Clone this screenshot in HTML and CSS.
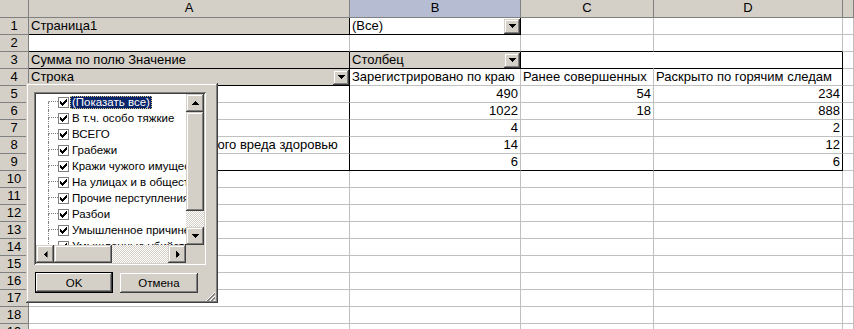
FILE: index.html
```html
<!DOCTYPE html>
<html lang="ru">
<head>
<meta charset="UTF-8">
<title>Сводная таблица</title>
<link rel="stylesheet" href="styles.css">
</head>
<body>
<div class="wrap">
<div class="sheet">
    <div class="hd"></div>
    <div class="hd">A</div>
    <div class="hd sel">B</div>
    <div class="hd">C</div>
    <div class="hd">D</div>
    <div class="hd"></div>

    <div class="hd">1</div>
    <div class="fld br bb">Страница1</div>
    <div class="drop br bb"><span>(Все)</span><span class="dd"><svg width="7" height="4"><path d="M0 0h7v1h-1v1h-1v1h-1v1h-1v-1h-1v-1h-1v-1h-1z"/></svg></span></div>
    <div></div>
    <div></div>
    <div></div>

    <div class="hd">2</div>
    <div class="bb"></div>
    <div class="bb"></div>
    <div class="bb"></div>
    <div class="bb"></div>
    <div></div>

    <div class="hd">3</div>
    <div class="fld br bb">Сумма по полю Значение</div>
    <div class="fld drop br bb"><span>Столбец</span><span class="dd"><svg width="7" height="4"><path d="M0 0h7v1h-1v1h-1v1h-1v1h-1v-1h-1v-1h-1v-1h-1z"/></svg></span></div>
    <div class="nr bb"></div>
    <div class="br bb"></div>
    <div></div>

    <div class="hd">4</div>
    <div class="fld drop br bb"><span>Строка</span><span class="dd"><svg width="7" height="4"><path d="M0 0h7v1h-1v1h-1v1h-1v1h-1v-1h-1v-1h-1v-1h-1z"/></svg></span></div>
    <div>Зарегистрировано по краю</div>
    <div>Ранее совершенных</div>
    <div class="br">Раскрыто по горячим следам</div>
    <div></div>

    <div class="hd">5</div>
    <div class="br"></div>
    <div class="num">490</div>
    <div class="num">54</div>
    <div class="num br">234</div>
    <div></div>

    <div class="hd">6</div>
    <div class="br"></div>
    <div class="num">1022</div>
    <div class="num">18</div>
    <div class="num br">888</div>
    <div></div>

    <div class="hd">7</div>
    <div class="br"></div>
    <div class="num">4</div>
    <div class="num"></div>
    <div class="num br">2</div>
    <div></div>

    <div class="hd">8</div>
    <div class="br">Умышленное причинение тяжкого вреда здоровью</div>
    <div class="num">14</div>
    <div class="num"></div>
    <div class="num br">12</div>
    <div></div>

    <div class="hd">9</div>
    <div class="br bb"></div>
    <div class="num bb">6</div>
    <div class="num bb"></div>
    <div class="num br bb">6</div>
    <div></div>

    <div class="hd">10</div><div></div><div></div><div></div><div></div><div></div>
    <div class="hd">11</div><div></div><div></div><div></div><div></div><div></div>
    <div class="hd">12</div><div></div><div></div><div></div><div></div><div></div>
    <div class="hd">13</div><div></div><div></div><div></div><div></div><div></div>
    <div class="hd">14</div><div></div><div></div><div></div><div></div><div></div>
    <div class="hd">15</div><div></div><div></div><div></div><div></div><div></div>
    <div class="hd">16</div><div></div><div></div><div></div><div></div><div></div>
    <div class="hd">17</div><div></div><div></div><div></div><div></div><div></div>
    <div class="hd">18</div><div></div><div></div><div></div><div></div><div></div>
    <div class="hd">19</div><div></div><div></div><div></div><div></div><div></div>
</div>

<!-- выпадающий список поля "Строка" -->
<div class="popup">
    <div class="lb">
        <div class="items">
            <div class="item first"><i class="tree"><b></b><b></b></i><span class="cb"><svg width="7" height="7"><path d="M0 2h1v3h-1zM1 3h1v3h-1zM2 4h1v3h-1zM3 3h1v3h-1zM4 2h1v3h-1zM5 1h1v3h-1zM6 0h1v3h-1z"/></svg></span><span class="lbl on">(Показать все)</span></div>
            <div class="item"><i class="tree"><b></b><b></b></i><span class="cb"><svg width="7" height="7"><path d="M0 2h1v3h-1zM1 3h1v3h-1zM2 4h1v3h-1zM3 3h1v3h-1zM4 2h1v3h-1zM5 1h1v3h-1zM6 0h1v3h-1z"/></svg></span><span class="lbl">В т.ч. особо тяжкие</span></div>
            <div class="item"><i class="tree"><b></b><b></b></i><span class="cb"><svg width="7" height="7"><path d="M0 2h1v3h-1zM1 3h1v3h-1zM2 4h1v3h-1zM3 3h1v3h-1zM4 2h1v3h-1zM5 1h1v3h-1zM6 0h1v3h-1z"/></svg></span><span class="lbl">ВСЕГО</span></div>
            <div class="item"><i class="tree"><b></b><b></b></i><span class="cb"><svg width="7" height="7"><path d="M0 2h1v3h-1zM1 3h1v3h-1zM2 4h1v3h-1zM3 3h1v3h-1zM4 2h1v3h-1zM5 1h1v3h-1zM6 0h1v3h-1z"/></svg></span><span class="lbl">Грабежи</span></div>
            <div class="item"><i class="tree"><b></b><b></b></i><span class="cb"><svg width="7" height="7"><path d="M0 2h1v3h-1zM1 3h1v3h-1zM2 4h1v3h-1zM3 3h1v3h-1zM4 2h1v3h-1zM5 1h1v3h-1zM6 0h1v3h-1z"/></svg></span><span class="lbl">Кражи чужого имущества</span></div>
            <div class="item"><i class="tree"><b></b><b></b></i><span class="cb"><svg width="7" height="7"><path d="M0 2h1v3h-1zM1 3h1v3h-1zM2 4h1v3h-1zM3 3h1v3h-1zM4 2h1v3h-1zM5 1h1v3h-1zM6 0h1v3h-1z"/></svg></span><span class="lbl">На улицах и в общественных местах</span></div>
            <div class="item"><i class="tree"><b></b><b></b></i><span class="cb"><svg width="7" height="7"><path d="M0 2h1v3h-1zM1 3h1v3h-1zM2 4h1v3h-1zM3 3h1v3h-1zM4 2h1v3h-1zM5 1h1v3h-1zM6 0h1v3h-1z"/></svg></span><span class="lbl">Прочие перступления</span></div>
            <div class="item"><i class="tree"><b></b><b></b></i><span class="cb"><svg width="7" height="7"><path d="M0 2h1v3h-1zM1 3h1v3h-1zM2 4h1v3h-1zM3 3h1v3h-1zM4 2h1v3h-1zM5 1h1v3h-1zM6 0h1v3h-1z"/></svg></span><span class="lbl">Разбои</span></div>
            <div class="item"><i class="tree"><b></b><b></b></i><span class="cb"><svg width="7" height="7"><path d="M0 2h1v3h-1zM1 3h1v3h-1zM2 4h1v3h-1zM3 3h1v3h-1zM4 2h1v3h-1zM5 1h1v3h-1zM6 0h1v3h-1z"/></svg></span><span class="lbl">Умышленное причинение тяжкого вреда здоровью</span></div>
            <div class="item"><i class="tree"><b></b><b></b></i><span class="cb"><svg width="7" height="7"><path d="M0 2h1v3h-1zM1 3h1v3h-1zM2 4h1v3h-1zM3 3h1v3h-1zM4 2h1v3h-1zM5 1h1v3h-1zM6 0h1v3h-1z"/></svg></span><span class="lbl">Умышленные убийства</span></div>
        </div>
        <div class="vs">
            <div class="sb up"><svg width="7" height="4"><path d="M0 0h7v1h-1v1h-1v1h-1v1h-1v-1h-1v-1h-1v-1h-1z"/></svg></div>
            <div class="thumb"></div>
            <div class="track"></div>
            <div class="sb"><svg width="7" height="4"><path d="M0 0h7v1h-1v1h-1v1h-1v1h-1v-1h-1v-1h-1v-1h-1z"/></svg></div>
        </div>
        <div class="hs">
            <div class="sb left"><svg width="7" height="4"><path d="M0 0h7v1h-1v1h-1v1h-1v1h-1v-1h-1v-1h-1v-1h-1z"/></svg></div>
            <div class="thumb"></div>
            <div class="track"></div>
            <div class="sb right"><svg width="7" height="4"><path d="M0 0h7v1h-1v1h-1v1h-1v1h-1v-1h-1v-1h-1v-1h-1z"/></svg></div>
        </div>
        <div class="corner"></div>
    </div>
    <div class="btns">
        <div class="btn def">OK</div>
        <div class="btn">Отмена</div>
        <svg class="grip" width="11" height="11">
            <path d="M10 1L1 10M10 5L5 10M10 9L9 10" stroke="#fff"/>
            <path d="M10 2L2 10M10 3L3 10M10 6L6 10M10 7L7 10" stroke="#808080"/>
        </svg>
    </div>
</div>
</div>
</body>
</html>
```

FILE: styles.css
```css
body {
    margin: 0;
    font-family: "Liberation Sans", Arial, sans-serif;
    background: #fff;
    overflow: hidden;
}
.wrap {
    position: relative;
    width: 854px;
    height: 329px;
    overflow: hidden;
}

/* лист */
.sheet {
    display: grid;
    grid-template-columns: 29px 321px 171px 133px 189px 1fr;
    grid-template-rows: 18px;
    grid-auto-rows: 17px;
    font-size: 13px;
    color: #000;
}
.sheet > div {
    box-sizing: border-box;
    border-right: 1px solid #c0c0c0;
    border-bottom: 1px solid #c0c0c0;
    white-space: nowrap;
    overflow: hidden;
    line-height: 16px;
    padding: 0 2px;
}
.sheet > .hd {
    background: #d4d0c8;
    border-color: #808080;
    text-align: center;
    padding: 0;
}
.sheet > .sel {
    background: #b6bdd2;
}
.sheet > .fld {
    background: #d4d0c8;
}
.sheet > .br {
    border-right-color: #000;
}
.sheet > .bb {
    border-bottom-color: #000;
}
.sheet > .nr {
    border-right-color: #fff;
}
.sheet > .num {
    text-align: right;
}
.sheet > .drop {
    display: flex;
    justify-content: space-between;
    align-items: center;
    padding-right: 0;
}
.dd {
    width: 16px;
    height: 15px;
    box-sizing: border-box;
    background: #d4d0c8;
    box-shadow: inset -1px -1px #404040, inset 1px 1px #d4d0c8, inset -2px -2px #808080, inset 2px 2px #fff;
    display: flex;
    align-items: center;
    justify-content: center;
}
.dd svg, .sb svg {
    shape-rendering: crispEdges;
}

/* окно фильтра */
.popup {
    position: absolute;
    left: 26px;
    top: 83px;
    width: 192px;
    height: 220px;
    box-sizing: border-box;
    padding: 9px 3px 0 8px;
    background: #d4d0c8;
    box-shadow: inset -1px -1px #404040, inset 1px 1px #d4d0c8, inset -2px -2px #808080, inset 2px 2px #fff;
    font-size: 11.5px;
}
.lb {
    width: 172px;
    height: 173px;
    box-sizing: border-box;
    padding: 2px;
    background: #fff;
    box-shadow: inset 1px 1px #808080, inset -1px -1px #fff, inset 2px 2px #404040, inset -2px -2px #d4d0c8;
    display: grid;
    grid-template-columns: 150px 18px;
    grid-template-rows: 151px 18px;
}
.items {
    overflow: hidden;
}
.item {
    display: flex;
    align-items: center;
    height: 16px;
    padding-left: 12px;
    white-space: nowrap;
}
.tree {
    width: 10px;
    height: 16px;
    flex: none;
}
.tree b {
    display: block;
    height: 8px;
    box-sizing: border-box;
    border-left: 1px dotted #808080;
}
.tree b:first-child {
    border-bottom: 1px dotted #808080;
}
.first .tree b:first-child {
    border-left-color: transparent;
}
.cb {
    width: 11px;
    height: 11px;
    box-sizing: border-box;
    flex: none;
    border: 1px solid #808080;
    background: #fff;
    display: flex;
    align-items: center;
    justify-content: center;
}
.cb svg {
    shape-rendering: crispEdges;
}
.lbl {
    margin-left: 1px;
    padding: 0 2px;
    height: 13px;
    line-height: 13px;
    box-sizing: border-box;
}
.lbl.on {
    background: #0a246a;
    color: #fff;
    outline: 1px dotted #d8c27a;
    outline-offset: -1px;
}

/* полосы прокрутки */
.vs, .hs {
    display: flex;
    background: #d4d0c8;
}
.vs {
    flex-direction: column;
}
.sb, .thumb, .corner {
    background: #d4d0c8;
    box-shadow: inset -1px -1px #404040, inset 1px 1px #d4d0c8, inset -2px -2px #808080, inset 2px 2px #fff;
}
.sb {
    flex: none;
    width: 18px;
    height: 18px;
    display: flex;
    align-items: center;
    justify-content: center;
}
.corner {
    box-shadow: none;
}
.vs .thumb {
    height: 99px;
    flex: none;
}
.hs .thumb {
    width: 58px;
    flex: none;
}
.track {
    flex: 1;
    background: repeating-conic-gradient(#fff 0 25%, #d4d0c8 0 50%) 0 0 / 2px 2px;
}
.up svg {
    transform: rotate(180deg);
}
.left svg {
    transform: rotate(90deg);
}
.right svg {
    transform: rotate(-90deg);
}

/* кнопки */
.btns {
    display: flex;
    align-items: flex-start;
    gap: 7px;
    margin-top: 7px;
    padding-left: 1px;
}
.btn {
    width: 82px;
    height: 20px;
    box-sizing: border-box;
    margin-top: 1px;
    background: #d4d0c8;
    box-shadow: inset -1px -1px #404040, inset 1px 1px #fff, inset -2px -2px #808080, inset 2px 2px #d4d0c8;
    display: flex;
    align-items: center;
    justify-content: center;
}
.btn.def {
    width: 83px;
    height: 21px;
    margin-top: 0;
    border: 1px solid #000;
}
.grip {
    margin-left: auto;
    margin-top: 19px;
    shape-rendering: crispEdges;
}
```
